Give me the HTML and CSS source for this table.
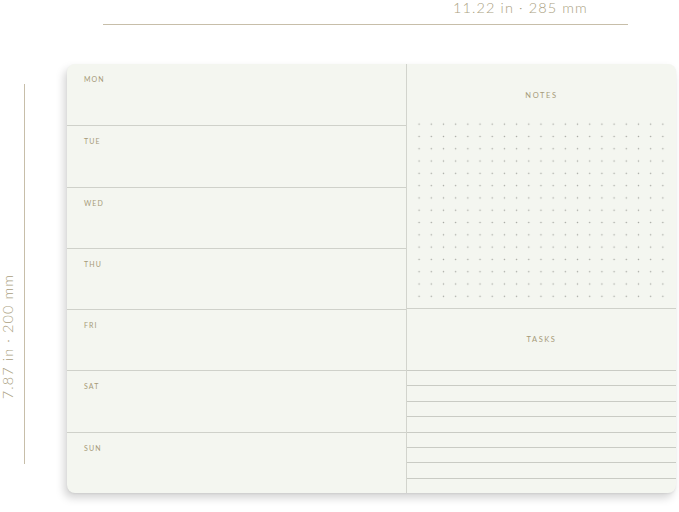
FILE: index.html
```html
<!DOCTYPE html>
<html>
<head>
<meta charset="utf-8">
<link rel="stylesheet" href="styles.css">
</head>
<body>
<div class="sheet">
  <div class="hdim"><span class="htext">11.22 in · 285 mm</span></div>
  <div class="vdim">
    <span class="vtext">7.87 in · 200 mm</span>
    <span class="vline"></span>
  </div>
  <div class="card">
    <div class="days">
      <div class="day"><span class="label">MON</span></div>
      <div class="day"><span class="label">TUE</span></div>
      <div class="day"><span class="label">WED</span></div>
      <div class="day"><span class="label">THU</span></div>
      <div class="day"><span class="label">FRI</span></div>
      <div class="day"><span class="label">SAT</span></div>
      <div class="day"><span class="label">SUN</span></div>
    </div>
    <div class="side">
      <div class="notes">
        <div class="title">NOTES</div>
        <div class="dots"></div>
      </div>
      <div class="tasks">
        <div class="title task-title">TASKS</div>
        <div class="task-lines">
          <div class="tl"></div><div class="tl"></div><div class="tl"></div><div class="tl"></div>
          <div class="tl"></div><div class="tl"></div><div class="tl"></div><div class="tl"></div>
        </div>
      </div>
    </div>
  </div>
</div>
</body>
</html>
```
FILE: styles.css
```css
html, body {
  margin: 0;
  padding: 0;
  background: #ffffff;
}
body {
  width: 679px;
  height: 512px;
  overflow: hidden;
  font-family: Lato, "Open Sans", sans-serif;
}
.sheet {
  display: grid;
  grid-template-columns: 67px 609px;
  grid-template-rows: 64px 429px;
}
.hdim {
  grid-column: 1 / 3;
  grid-row: 1;
  margin-left: 103px;
  width: 525px;
  height: 24px;
  border-bottom: 1px solid #c7bea9;
  box-sizing: content-box;
}
.htext {
  display: block;
  padding-left: 350px;
  font-size: 14.5px;
  font-weight: 300;
  line-height: normal;
  letter-spacing: 1.1px;
  color: #ab9f82;
  white-space: nowrap;
  margin-top: -1px;
}
.vdim {
  grid-column: 1;
  grid-row: 2;
  display: flex;
  align-items: flex-start;
  padding-top: 20px;
}
.vtext {
  writing-mode: vertical-rl;
  transform: rotate(180deg);
  margin-top: 190px;
  width: 14px;
  margin-left: 1px;
  font-size: 14.5px;
  font-weight: 300;
  line-height: 14px;
  letter-spacing: 1.1px;
  color: #ab9f82;
  white-space: nowrap;
}
.vline {
  display: block;
  margin-left: 9px;
  width: 0;
  height: 380px;
  border-left: 1px solid #c7bea9;
}
.card {
  grid-column: 2;
  grid-row: 2;
  display: grid;
  grid-template-columns: 340px 1fr;
  background: #f4f6f0;
  border-radius: 8px;
  box-shadow: -3px 5px 9px rgba(0, 0, 0, 0.17), 0 1px 2px rgba(0, 0, 0, 0.06);
  overflow: hidden;
}
.days {
  display: grid;
  grid-template-rows: repeat(7, 1fr);
  border-right: 1px solid #d2d4cd;
}
.day {
  padding: 11px 0 0 17px;
}
.day + .day {
  border-top: 1px solid #cfd1ca;
}
.label {
  display: block;
  font-size: 7px;
  line-height: 8px;
  letter-spacing: 1.1px;
  color: #a69a78;
}
.side {
  display: flex;
  flex-direction: column;
}
.notes {
  border-bottom: 1px solid #cfd1ca;
  box-sizing: border-box;
  height: 245px;
}
.title {
  text-align: center;
  font-size: 7.5px;
  line-height: 10px;
  letter-spacing: 1.6px;
  color: #a69a78;
  padding-top: 27px;
}
.dots {
  margin: 17px 0 0 6px;
  width: 257px;
  height: 185px;
  background-image: radial-gradient(circle, #a3a59f 0.5px, rgba(163, 165, 159, 0) 1.05px);
  background-size: 12.2px 12.3px;
}
.tasks {
  flex: 1;
  display: flex;
  flex-direction: column;
}
.task-title {
  height: 61px;
  box-sizing: border-box;
  padding-top: 26px;
}
.task-lines {
  flex: 1;
  display: grid;
  grid-template-rows: repeat(8, 1fr);
}
.tl {
  border-top: 1px solid #c9cbc4;
}
```
